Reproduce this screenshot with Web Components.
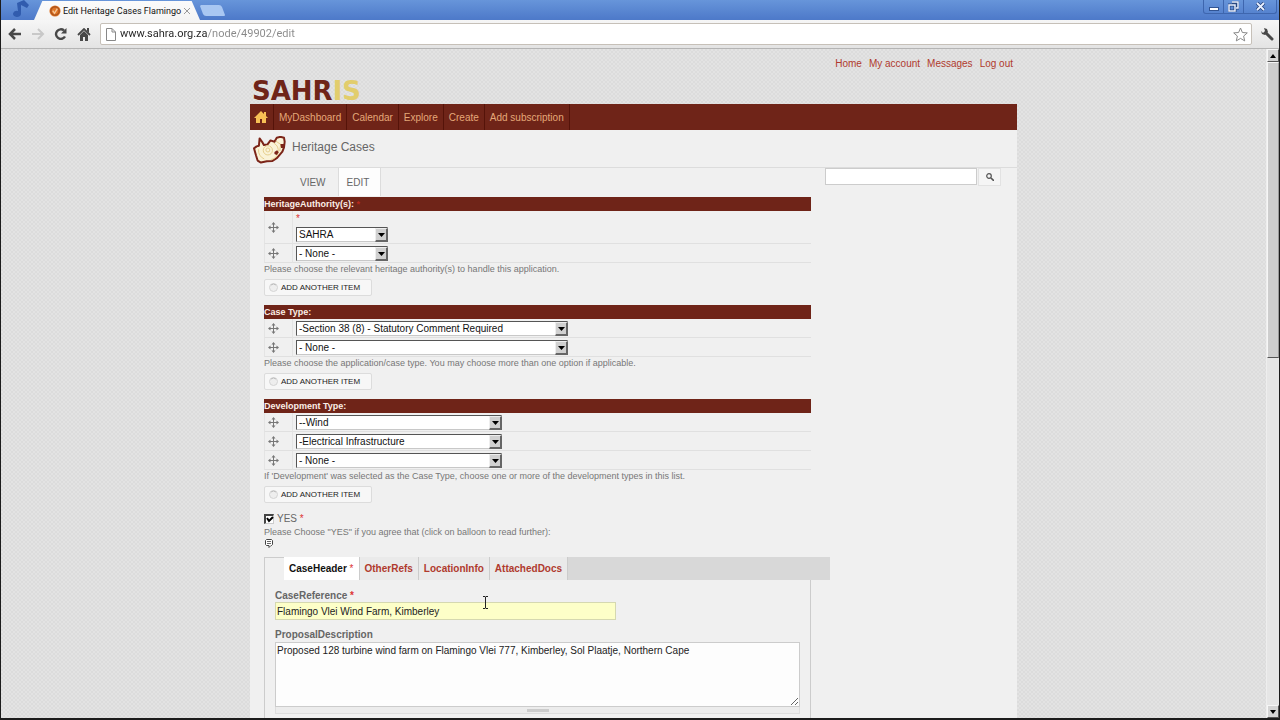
<!DOCTYPE html>
<html lang="en">
<head>
<meta charset="utf-8">
<meta name="viewport" content="width=device-width, initial-scale=1">
<title>Edit Heritage Cases Flamingo Vlei Wind Farm</title>
<style>
  body {
    margin: 0;
    height: 100vh;
    overflow: hidden;
    font-family: "Liberation Sans", Arial, sans-serif;
    font-size: 10px;
    line-height: 12px;
    color: #666;
    --brand: #6f2418;
    --link: #b03a2e;
    --line: #dcdcdc;
    --page: #f0f0f0;
  }
</style>
</head>
<body>

<browser-window>
  <browser-tabs slot="tabs" label="Edit Heritage Cases Flamingo"></browser-tabs>
  <browser-toolbar slot="toolbar" url="www.sahra.org.za/node/49902/edit"></browser-toolbar>

  <site-header></site-header>
  <site-page heading="Heritage Cases">
    <item-list heading="HeritageAuthority(s):" size="small" required
      values="SAHRA|- None -"
      help="Please choose the relevant heritage authority(s) to handle this application."></item-list>
    <item-list heading="Case Type:" size="large"
      values="-Section 38 (8) - Statutory Comment Required|- None -"
      help="Please choose the application/case type. You may choose more than one option if applicable."></item-list>
    <item-list heading="Development Type:" size="medium"
      values="--Wind|-Electrical Infrastructure|- None -"
      help="If 'Development' was selected as the Case Type, choose one or more of the development types in this list."></item-list>
    <agree-box></agree-box>
    <tab-group tabs="CaseHeader|OtherRefs|LocationInfo|AttachedDocs">
      <text-field label="CaseReference" value="Flamingo Vlei Wind Farm, Kimberley" required></text-field>
      <text-field label="ProposalDescription" multiline
        value="Proposed 128 turbine wind farm on Flamingo Vlei 777, Kimberley, Sol Plaatje, Northern Cape"></text-field>
    </tab-group>
    <search-box slot="side"></search-box>
  </site-page>
</browser-window>
<text-cursor></text-cursor>

<script>
class BrowserWindow extends HTMLElement {
  constructor() {
    super();
    this.attachShadow({ mode: 'open' }).innerHTML = `
    <style>
    :host {
      display: flex;
      flex-direction: column;
      box-sizing: border-box;
      height: 100vh;
      border: solid #1c1c1c;
      border-width: 0 1px 2px;
    }
    .view {
      flex: 1;
      min-height: 0;
      display: flex;
    }
    .content {
      flex: 1;
      overflow: hidden;
      background:
        repeating-conic-gradient(#e3e3e3 0 25%, #dcdcdc 0 50%) 0 0 / 4px 4px;
    }
    </style>
    <slot name="tabs"></slot>
    <slot name="toolbar"></slot>
    <div class="view">
      <div class="content"><slot></slot></div>
      <scroll-rail></scroll-rail>
    </div>
    `;
  }
}

class BrowserTabs extends HTMLElement {
  connectedCallback() {
    this.attachShadow({ mode: 'open' }).innerHTML = `
    <style>
    :host {
      display: flex;
      height: 20px;
      background: linear-gradient(#6795da, #4d79c9);
      font: 9px/18px Roboto, sans-serif;
      color: #111;
    }
    svg { display: block; flex: none; }
    .note { margin: 0 0 0 8px; }
    .tab {
      display: flex;
      align-items: center;
      box-sizing: border-box;
      width: 166px;
      margin-top: 1px;
      padding: 0 10px 0 15px;
      background: linear-gradient(#fbfbfb, #f4f4f4);
      clip-path: polygon(5% 0, 95% 0, 100% 100%, 0 100%);
    }
    .label {
      flex: 1;
      margin-left: 2px;
      white-space: nowrap;
    }
    button {
      border: 0;
      padding: 0;
      background: none;
    }
    .add { align-self: flex-start; margin-top: 5px; }
    .controls {
      display: flex;
      height: 13px;
      margin-left: auto;
      margin-right: 2px;
      border: 1px solid #3e66ae;
      border-top: 0;
      border-radius: 0 0 3px 3px;
    }
    .controls button {
      display: grid;
      place-items: center;
      width: 20px;
      border-right: 1px solid #3e66ae;
    }
    .controls button:last-child { width: 32px; border: 0; }
    </style>
    <svg class="note" width="25" height="20" viewBox="0 0 25 20"><path d="M8 3l7-3 5 5-2 3-6-3v9a4 3 0 1 1-3-3z" fill="#315cae"/></svg>
    <div class="tab">
      <svg width="12" height="12" viewBox="0 0 13 13">
        <circle cx="6.500" cy="6.500" r="6" fill="#df7425"/>
        <circle cx="6.500" cy="6.500" r="4.500" fill="none" stroke="#8c421a"/>
        <path d="M4 6l2 3 3-5" fill="none" stroke="#f5c797" stroke-width="1.500"/>
      </svg>
      <span class="label">${this.getAttribute('label')}</span>
      <button aria-label="Close tab"><svg width="6" height="6" viewBox="0 0 6 6"><path d="M0 0l6 6M6 0L0 6" stroke="#999"/></svg></button>
    </div>
    <button class="add" aria-label="New tab"><svg width="25" height="11" viewBox="0 0 25 11"><path d="M1 0h18q2 0 3 2l3 8q0 1-1 1H6q-2 0-3-2L0 1z" fill="#a9c7f2"/></svg></button>
    <div class="controls">
      <button aria-label="Minimize"><svg width="10" height="8" viewBox="0 0 10 8"><rect x=".5" y="4.500" width="9" height="3" fill="#fff" stroke="#315493"/></svg></button>
      <button aria-label="Restore"><svg width="11" height="11" viewBox="0 0 11 11"><path d="M4 1h6v6H8M1 4h6v6H1z" fill="none" stroke="#29477f" stroke-width="3"/><path d="M4 1h6v6H8M1 4h6v6H1z" fill="none" stroke="#e8f0ff" stroke-width="1.500"/></svg></button>
      <button aria-label="Close"><svg width="9" height="9" viewBox="0 0 9 9"><path d="M1 1l7 7M8 1L1 8" stroke="#29477f" stroke-width="3.500"/><path d="M1 1l7 7M8 1L1 8" stroke="#e8f0ff" stroke-width="1.800"/></svg></button>
    </div>
    `;
  }
}

class BrowserToolbar extends HTMLElement {
  connectedCallback() {
    this.attachShadow({ mode: 'open' }).innerHTML = `
    <style>
    :host {
      display: flex;
      align-items: center;
      gap: 9px;
      box-sizing: border-box;
      height: 29px;
      padding: 0 5px 0 7px;
      background: linear-gradient(#f6f6f6, #e3e3e3);
      border-bottom: 1px solid #b4b4b4;
    }
    button {
      flex: none;
      display: block;
      border: 0;
      padding: 0;
      background: none;
    }
    svg { display: block; fill: none; stroke: #484848; stroke-width: 2; }
    .address {
      flex: 1;
      display: flex;
      align-items: center;
      gap: 4px;
      box-sizing: border-box;
      height: 22px;
      padding: 0 3px 0 5px;
      background: #fff;
      border: 1px solid #c6c0b8;
      border-radius: 2px;
    }
    .address svg { stroke: #888; stroke-width: 1; }
    input {
      flex: 1;
      min-width: 0;
      border: 0;
      padding: 0;
      outline: 0;
      font: 11px/20px Roboto, sans-serif;
      color: transparent;
      background: linear-gradient(90deg, #222 88px, #888 88px);
      -webkit-background-clip: text;
      background-clip: text;
    }
    </style>
    <button aria-label="Back"><svg width="14" height="12" viewBox="0 0 14 12"><path d="M2 6h11M7 1L2 6l5 5" stroke-width="2.500"/></svg></button>
    <button aria-label="Forward"><svg width="14" height="12" viewBox="0 0 14 12"><path d="M1 6h11M7 1l5 5-5 5" style="stroke:#c8c8c8"/></svg></button>
    <button aria-label="Reload"><svg width="14" height="12" viewBox="0 0 14 12"><path d="M11 8.500A4.800 4.800 0 1 1 10 2.500" stroke-width="2.400"/><path d="M12.500 0v5.500H7z" fill="#484848" stroke="none"/></svg></button>
    <button aria-label="Home"><svg width="14" height="13" viewBox="0 0 14 13"><path d="M1 7l6-6 6 6" stroke-width="1.800"/><path d="M10 0h2v5l-2-2zM3 7l4-4 4 4v6H8V9H6v4H3z" fill="#484848" stroke="none"/></svg></button>
    <div class="address">
      <svg width="10" height="13" viewBox="0 0 10 13"><path d="M.5.500h5.500l3.500 3.500v8.500h-9zM6 .5V4h3.500"/></svg>
      <input type="text" aria-label="Address" value="${this.getAttribute('url')}">
      <button aria-label="Bookmark"><svg width="15" height="15" viewBox="0 0 15 15"><path d="M7.500 1l1.900 4.500 4.900.4-3.700 3.200 1.100 4.800-4.200-2.500-4.200 2.500 1.100-4.800L.7 5.900l4.900-.4z"/></svg></button>
    </div>
    <button aria-label="Settings"><svg width="13" height="13" viewBox="0 0 13 13"><path d="M5 5l6 6" stroke-width="3" stroke-linecap="round"/><path d="M3 0l3 1 1 3-3 3-3-1-1-3 2 2 2-2z" fill="#484848" stroke="none"/></svg></button>
    `;
  }
}

class ScrollRail extends HTMLElement {
  constructor() {
    super();
    this.attachShadow({ mode: 'open' }).innerHTML = `
    <style>
    :host {
      display: flex;
      flex-direction: column;
      width: 12px;
      background: #e6e6e6;
      border-left: 1px solid #eee;
    }
    button, .thumb {
      box-sizing: border-box;
      background: #d4d4d4;
      border: 1px solid;
      border-color: #f6f6f6 #555 #555 #f6f6f6;
    }
    button {
      display: grid;
      place-items: center;
      height: 13px;
      padding: 0;
    }
    .track { flex: 1; }
    .thumb { height: 46%; background: #cecece; border-right-color: #999; }
    </style>
    <button aria-label="Scroll up"><svg width="6" height="4" viewBox="0 0 6 4"><path d="M0 4l3-4 3 4z"/></svg></button>
    <div class="track"><div class="thumb"></div></div>
    <button aria-label="Scroll down"><svg width="6" height="4" viewBox="0 0 6 4"><path d="M0 0l3 4 3-4z"/></svg></button>
    `;
  }
}

class SiteHeader extends HTMLElement {
  constructor() {
    super();
    this.attachShadow({ mode: 'open' }).innerHTML = `
    <style>
    :host {
      display: block;
      max-width: 767px;
      margin: 0 auto;
    }
    a { color: inherit; text-decoration: none; }
    .top {
      display: flex;
      justify-content: space-between;
      box-sizing: border-box;
      height: 55px;
      padding: 9px 4px 0 2px;
    }
    .logo {
      align-self: flex-end;
      font: bold 26px/26px "DejaVu Sans", Verdana, sans-serif;
      color: var(--brand);
    }
    .logo span { color: #e2cd6c; }
    .account {
      display: flex;
      gap: 7px;
      color: var(--link);
    }
    nav {
      display: flex;
      height: 26px;
      background: var(--brand);
      color: #e5a878;
    }
    nav a {
      display: flex;
      align-items: center;
      padding: 2px 5px 0;
      border-right: 1px solid #551309;
    }
    nav a:first-child { padding: 0 5px 0 4px; }
    </style>
    <div class="top">
      <a class="logo" href="#">SAHR<span>IS</span></a>
      <div class="account">
        <a href="#">Home</a><a href="#">My account</a><a href="#">Messages</a><a href="#">Log out</a>
      </div>
    </div>
    <nav>
      <a href="#" aria-label="Home"><svg width="14" height="12" viewBox="0 0 14 12"><path d="M7 0l3 3V1h2v4l2 2h-2v5H8V8H6v4H2V7H0z" fill="#f7bf55"/></svg></a>
      <a href="#">MyDashboard</a>
      <a href="#">Calendar</a>
      <a href="#">Explore</a>
      <a href="#">Create</a>
      <a href="#">Add subscription</a>
    </nav>
    `;
  }
}

class SitePage extends HTMLElement {
  connectedCallback() {
    this.attachShadow({ mode: 'open' }).innerHTML = `
    <style>
    :host {
      display: block;
      max-width: 767px;
      margin: 0 auto;
      background: var(--page);
    }
    header {
      display: flex;
      align-items: center;
      gap: 6px;
      box-sizing: border-box;
      height: 38px;
      padding: 0 3px;
      border-bottom: 1px solid var(--line);
    }
    header svg { margin-top: 2px; }
    h1 {
      margin: 0 0 4px;
      font-size: 12px;
      line-height: 16px;
      font-weight: normal;
    }
    .columns {
      display: flex;
      gap: 14px;
      padding: 0 14px;
    }
    main { flex: 1; min-width: 0; }
    aside { flex: none; width: 178px; }
    .modes {
      display: flex;
      gap: 4px;
      height: 29px;
      padding-left: 28px;
    }
    .modes a {
      box-sizing: border-box;
      height: 28px;
      padding: 0 8px;
      line-height: 29px;
      color: inherit;
      text-decoration: none;
    }
    .modes .on {
      width: 43px;
      background: #fdfdfd;
      border: solid var(--line);
      border-width: 0 1px;
    }
    </style>
    <header>
      <svg width="33" height="28" viewBox="38 256 100 84">
        <path d="M41 293l8-6 7-2 2-22 8 11 5 9 11-2 9-12 12 4 7-12 11-3 11 3 2 12-2 17-5 13-16 19-14 9-17 1-18 4-10-6-5-16z" fill="#faf3d8" stroke="#7b2418" stroke-width="6" stroke-linejoin="round"/>
        <g fill="none" stroke="#e5cd8c" stroke-width="3">
          <circle cx="83" cy="298" r="6"/>
          <circle cx="83" cy="299" r="14"/>
          <path d="M72 325a27 27 0 0 1-17-29M101 277a27 27 0 0 1-9 50M107 271l15 10-3 20"/>
        </g>
        <path d="M121 280h13l-2 12h-9zM103 304l8-5 5 6-6 8-7-3z" fill="#7b2418"/>
      </svg>
      <h1>${this.getAttribute('heading')}</h1>
    </header>
    <div class="columns">
      <main>
        <nav class="modes"><a href="#">VIEW</a><a class="on" href="#">EDIT</a></nav>
        <slot></slot>
      </main>
      <aside><slot name="side"></slot></aside>
    </div>
    `;
  }
}

class SearchBox extends HTMLElement {
  constructor() {
    super();
    this.attachShadow({ mode: 'open' }).innerHTML = `
    <style>
    :host { display: flex; gap: 1px; }
    input {
      box-sizing: border-box;
      width: 152px;
      height: 17px;
      border: 1px solid #ccc;
      padding: 0 2px;
      background: #fff;
    }
    button {
      display: grid;
      place-items: center;
      width: 23px;
      height: 18px;
      padding: 0;
      border: 1px solid #e2e2e2;
      background: #f5f5f5;
    }
    </style>
    <input type="text" aria-label="Search">
    <button aria-label="Search"><svg width="8" height="8" viewBox="0 0 8 8"><circle cx="3" cy="3" r="2.300" fill="none" stroke="#555" stroke-width="1.200"/><path d="M5 5l3 3" stroke="#555" stroke-width="1.600"/></svg></button>
    `;
  }
}

class DropDown extends HTMLElement {
  connectedCallback() {
    const value = this.getAttribute('value');
    const none = value === '- None -' ? '' : '<option>- None -</option>';
    this.attachShadow({ mode: 'open' }).innerHTML = `
    <style>
    :host {
      display: grid;
      width: 92px;
      height: 15px;
    }
    :host([size="medium"]) { width: 206px; }
    :host([size="large"]) { width: 272px; }
    select, .arrow { grid-area: 1 / 1; }
    select {
      appearance: none;
      box-sizing: border-box;
      width: 100%;
      height: 15px;
      margin: 0;
      padding: 0 14px 0 2px;
      border: 1px solid;
      border-color: #555 #c8c8c8 #c8c8c8 #555;
      border-radius: 0;
      background: #fff;
      color: #111;
      font: inherit;
      line-height: 13px;
    }
    .arrow {
      justify-self: end;
      display: grid;
      place-items: center;
      box-sizing: border-box;
      width: 13px;
      margin-top: 1px;
      background: #d0d0d0;
      border: solid;
      border-width: 1px 2px 2px 1px;
      border-color: #eee #666 #666 #eee;
      pointer-events: none;
    }
    </style>
    <select aria-label="${this.getAttribute('label')}"><option selected>${value}</option>${none}</select>
    <span class="arrow"><svg width="7" height="4" viewBox="0 0 7 4"><path d="M0 0h7L3.500 4z"/></svg></span>
    `;
  }
}

class ItemList extends HTMLElement {
  connectedCallback() {
    const heading = this.getAttribute('heading');
    const required = this.hasAttribute('required');
    const rows = this.getAttribute('values').split('|').map((value, i) => `
      <tr>
        <td class="handle">
          <svg width="11" height="11" viewBox="0 0 11 11"><path d="M5.500 1v9M1 5.500h9" stroke="#777"/><path d="M5.500 0l2 2.500h-4zM5.500 11l2-2.500h-4zM0 5.500l2.500-2v4zM11 5.500l-2.500-2v4z" fill="#777"/></svg>
        </td>
        <td>
          ${required && i === 0 ? '<div class="mark">*</div>' : ''}
          <drop-down size="${this.getAttribute('size')}" label="${heading}" value="${value}"></drop-down>
        </td>
      </tr>`).join('');
    this.attachShadow({ mode: 'open' }).innerHTML = `
    <style>
    :host { display: block; margin-bottom: 9px; }
    table {
      width: 100%;
      border-spacing: 0;
    }
    th {
      padding: 0;
      background: var(--brand);
      color: #fbeee6;
      font-size: 9px;
      line-height: 14px;
      text-align: left;
    }
    th span { color: #b8281c; }
    td {
      padding: 2px 0 1px 3px;
      border-bottom: 1px solid #e0e0e0;
    }
    .handle {
      width: 24px;
      border-left: 1px solid #e4e4e4;
      border-right: 1px solid #e4e4e4;
    }
    svg { display: block; }
    .mark { height: 14px; color: #d33; }
    p {
      margin: 0 0 4px;
      font-size: 9px;
      color: #777;
    }
    button {
      display: flex;
      align-items: center;
      gap: 3px;
      box-sizing: border-box;
      width: 108px;
      height: 17px;
      padding: 0 4px;
      border: 1px solid #dcdcdc;
      border-radius: 2px;
      background: #f7f7f7;
      color: #222;
      font: inherit;
      font-size: 8px;
      white-space: nowrap;
    }
    </style>
    <table>
      <tr><th colspan="2">${heading}${required ? ' <span>*</span>' : ''}</th></tr>
      ${rows}
    </table>
    <p>${this.getAttribute('help')}</p>
    <button><svg width="9" height="9" viewBox="0 0 9 9"><circle cx="4.500" cy="4.500" r="4" fill="#eee" stroke="#d4d4d4"/><path d="M2 2a4 4 0 0 1 5 0" fill="none" stroke="#bbb"/></svg>ADD ANOTHER ITEM</button>
    `;
  }
}

class AgreeBox extends HTMLElement {
  constructor() {
    super();
    this.attachShadow({ mode: 'open' }).innerHTML = `
    <style>
    :host { display: block; margin-bottom: 9px; }
    label {
      display: flex;
      align-items: center;
      gap: 3px;
      height: 14px;
    }
    .box { display: grid; }
    .box > * { grid-area: 1 / 1; }
    input {
      appearance: none;
      box-sizing: border-box;
      width: 10px;
      height: 10px;
      margin: 0;
      border: solid;
      border-width: 2px 1px 1px 2px;
      border-color: #444 #ccc #ccc #444;
      background: #fff;
    }
    .box svg { visibility: hidden; pointer-events: none; }
    input:checked + svg { visibility: visible; }
    .mark { color: #d33; }
    p { margin: 0 0 1px; font-size: 9px; color: #777; }
    svg { display: block; }
    a { display: block; width: 9px; margin-left: 1px; }
    </style>
    <label>
      <span class="box">
        <input type="checkbox" checked>
        <svg width="10" height="10" viewBox="0 0 10 10"><path d="M3 4l2 3 4-4" fill="none" stroke="#000" stroke-width="2"/></svg>
      </span>
      <span>YES <span class="mark">*</span></span>
    </label>
    <p>Please Choose "YES" if you agree that (click on balloon to read further):</p>
    <a href="#" aria-label="Read further"><svg width="9" height="9" viewBox="0 0 9 9"><path d="M1.500.500h5l1 1v4l-1 1H6l-2 2v-2H1.500l-1-1v-4z" fill="#fff" stroke="#444"/><path d="M2 2.500h4M2 4.500h4" stroke="#666"/></svg></a>
    `;
  }
}

class TabGroup extends HTMLElement {
  connectedCallback() {
    const tabs = this.getAttribute('tabs').split('|').map((name, i) =>
      `<li>${i ? `<a href="#">${name}</a>` : `<a class="on" href="#">${name} <span>*</span></a>`}</li>`).join('');
    this.attachShadow({ mode: 'open' }).innerHTML = `
    <style>
    :host {
      display: block;
      border: 1px solid #ccc;
      border-bottom: 0;
    }
    ul {
      display: flex;
      height: 23px;
      margin: -1px -20px 0 19px;
      padding: 0;
      list-style: none;
      background: #d8d8d8;
    }
    a {
      display: block;
      padding: 0 5px;
      border-right: 1px solid #ccc;
      background: #eaeaea;
      color: var(--link);
      font-weight: bold;
      line-height: 23px;
      text-decoration: none;
    }
    .on { background: #fff; color: #111; }
    .on span { color: #d33; font-weight: normal; }
    .pane {
      display: flex;
      flex-direction: column;
      gap: 9px;
      padding: 10px 10px;
    }
    </style>
    <ul>${tabs}</ul>
    <div class="pane"><slot></slot></div>
    `;
  }
}

class TextField extends HTMLElement {
  connectedCallback() {
    const value = this.getAttribute('value');
    const control = this.hasAttribute('multiline')
      ? `<textarea id="control">${value}</textarea><div class="grip"><i></i></div>`
      : `<input id="control" type="text" value="${value}">`;
    this.attachShadow({ mode: 'open' }).innerHTML = `
    <style>
    :host { display: block; }
    label {
      display: block;
      font-weight: bold;
    }
    span { color: #d33; }
    input, textarea {
      display: block;
      box-sizing: border-box;
      border: 1px solid #ccc;
      border-radius: 0;
      color: #222;
      font: inherit;
    }
    input {
      width: 341px;
      height: 18px;
      padding: 0 1px;
      background: #fdffc8;
      border-color: #d5d8b0;
    }
    textarea {
      width: 100%;
      height: 65px;
      margin-top: 1px;
      padding: 2px 1px;
      background: #fdfdfd;
    }
    .grip {
      display: grid;
      place-items: center;
      height: 6px;
      border: 1px solid #ddd;
      border-top: 0;
      background: #ececec;
    }
    i { width: 22px; height: 3px; background: #ccc; }
    </style>
    <label for="control">${this.getAttribute('label')}${this.hasAttribute('required') ? ' <span>*</span>' : ''}</label>
    ${control}
    `;
  }
}

// mouse pointer, floats over the page
class TextCursor extends HTMLElement {
  constructor() {
    super();
    this.attachShadow({ mode: 'open' }).innerHTML = `
    <style>
    :host {
      position: absolute;
      left: 482px;
      top: 596px;
      pointer-events: none;
    }
    svg { display: block; }
    </style>
    <svg width="7" height="13" viewBox="0 0 7 13"><path d="M1 .5h2l.5.500.5-.5h2M3.500 1v11M1 12.500h2l.5-.5.5.500h2" fill="none" stroke="#222"/></svg>
    `;
  }
}

customElements.define('browser-window', BrowserWindow);
customElements.define('browser-tabs', BrowserTabs);
customElements.define('browser-toolbar', BrowserToolbar);
customElements.define('scroll-rail', ScrollRail);
customElements.define('site-header', SiteHeader);
customElements.define('site-page', SitePage);
customElements.define('search-box', SearchBox);
customElements.define('drop-down', DropDown);
customElements.define('item-list', ItemList);
customElements.define('agree-box', AgreeBox);
customElements.define('tab-group', TabGroup);
customElements.define('text-field', TextField);
customElements.define('text-cursor', TextCursor);
</script>
</body>
</html>
